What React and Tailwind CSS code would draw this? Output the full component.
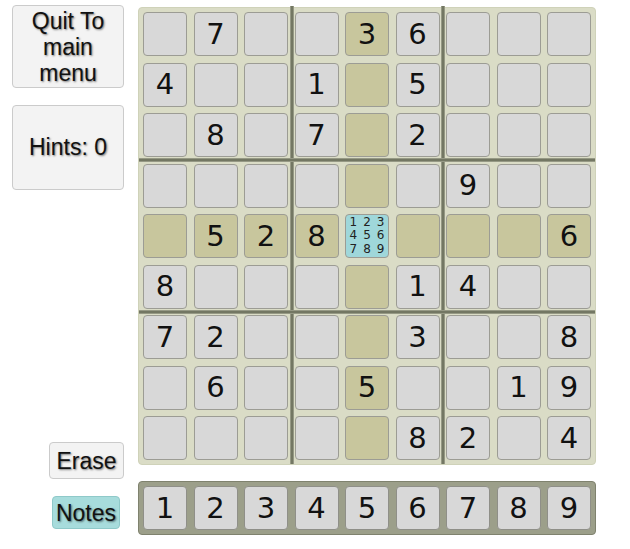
import React from "react";

const PUZZLE = [
  [0, 7, 0, 0, 3, 6, 0, 0, 0],
  [4, 0, 0, 1, 0, 5, 0, 0, 0],
  [0, 8, 0, 7, 0, 2, 0, 0, 0],
  [0, 0, 0, 0, 0, 0, 9, 0, 0],
  [0, 5, 2, 8, 0, 0, 0, 0, 6],
  [8, 0, 0, 0, 0, 1, 4, 0, 0],
  [7, 2, 0, 0, 0, 3, 0, 0, 8],
  [0, 6, 0, 0, 5, 0, 0, 1, 9],
  [0, 0, 0, 0, 0, 8, 2, 0, 4],
];

const SEL_ROW = 4;
const SEL_COL = 4;

const digitFont = "font-['DejaVu_Sans',sans-serif]";
const btnText =
  "font-['Liberation_Sans',Arial,sans-serif] text-[23px] text-[#111] [text-shadow:1px_1px_2px_rgba(0,0,0,0.5)]";

function Cell({ value, row, col }) {
  const selected = row === SEL_ROW && col === SEL_COL;
  const related = row === SEL_ROW || col === SEL_COL;
  const bg = selected ? "bg-[#9fd7da]" : related ? "bg-[#c8c69d]" : "bg-[#d8d8d8]";
  return (
    <div
      className={`h-[44px] rounded-[4px] border border-[#9c9c94] ${bg} flex items-center justify-center ${digitFont} text-[29px] leading-none text-[#111]`}
    >
      {selected ? (
        <div className="grid grid-cols-3 gap-x-[6px] text-[12px] leading-[13.5px] text-[#222]">
          {[1, 2, 3, 4, 5, 6, 7, 8, 9].map((n) => (
            <span key={n} className="text-center">
              {n}
            </span>
          ))}
        </div>
      ) : value ? (
        value
      ) : null}
    </div>
  );
}

function Board() {
  return (
    <div className="relative w-[458px] h-[458px] rounded-[4px] bg-[#dadcc6] border border-[#cfd2b9] p-[4px] grid grid-cols-9 gap-[6.5px] content-start">
      {PUZZLE.map((r, ri) =>
        r.map((v, ci) => <Cell key={`${ri}-${ci}`} value={v} row={ri} col={ci} />)
      )}
      {/* 3x3 box dividers */}
      <div className="absolute top-[-2px] bottom-0 left-[151px] w-[4px] bg-[#737763] border-x border-[#969985]" />
      <div className="absolute top-[-2px] bottom-0 left-[302px] w-[4px] bg-[#737763] border-x border-[#969985]" />
      <div className="absolute left-0 right-0 top-[150px] h-[4px] bg-[#737763] border-y border-[#969985]" />
      <div className="absolute left-0 right-0 top-[302px] h-[4px] bg-[#737763] border-y border-[#969985]" />
    </div>
  );
}

function NumberPad() {
  return (
    <div className="w-[458px] h-[54px] rounded-[4px] bg-[#9c9f8a] border border-[#7f826e] px-[4px] py-[4px] grid grid-cols-9 gap-[6.5px]">
      {[1, 2, 3, 4, 5, 6, 7, 8, 9].map((n) => (
        <div
          key={n}
          className={`h-[44px] rounded-[4px] border border-[#8f8f88] bg-[#d8d8d8] flex items-center justify-center ${digitFont} text-[29px] leading-none text-[#111]`}
        >
          {n}
        </div>
      ))}
    </div>
  );
}

export default function App() {
  return (
    <div className="w-[630px] h-[549px] bg-white flex flex-col">
      <div className="flex items-start">
        <div className="w-[138px] h-[479px] flex flex-col items-start">
          <div
            className={`ml-[12px] mt-[5px] w-[112px] h-[83px] rounded-[4px] border border-[#cbcbcb] bg-[#f3f3f3] flex flex-col items-center justify-center leading-[26px] ${btnText}`}
          >
            <span>Quit To</span>
            <span>main</span>
            <span>menu</span>
          </div>
          <div
            className={`ml-[12px] mt-[17px] w-[112px] h-[85px] rounded-[4px] border border-[#cbcbcb] bg-[#f3f3f3] flex items-center justify-center ${btnText}`}
          >
            Hints: 0
          </div>
          <div
            className={`mt-auto self-end mr-[14px] w-[75px] h-[37px] pt-[2px] rounded-[4px] border border-[#cbcbcb] bg-[#f3f3f3] flex items-center justify-center ${btnText}`}
          >
            Erase
          </div>
        </div>
        <div className="mt-[7px]">
          <Board />
        </div>
      </div>
      <div className="flex items-start mt-[2px]">
        <div className="w-[138px] flex">
          <div
            className={`ml-[52px] mt-[15px] w-[68px] h-[33px] pt-[1px] rounded-[4px] border border-[#8fc9c9] bg-[#a7dcdc] flex items-center justify-center ${btnText}`}
          >
            Notes
          </div>
        </div>
        <NumberPad />
      </div>
    </div>
  );
}
